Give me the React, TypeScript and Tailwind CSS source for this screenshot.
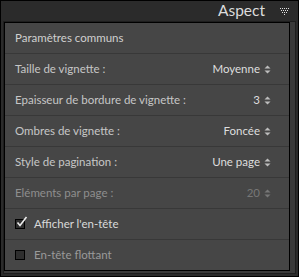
import { Fragment } from "react";

type Row = { label: string; value: string; disabled?: boolean };

const rows: Row[] = [
  { label: "Taille de vignette :", value: "Moyenne" },
  { label: "Epaisseur de bordure de vignette :", value: "3" },
  { label: "Ombres de vignette :", value: "Foncée" },
  { label: "Style de pagination :", value: "Une page" },
  { label: "Eléments par page :", value: "20", disabled: true },
];

const Stepper = ({ dim }: { dim?: boolean }) => (
  <svg width="7" height="9" viewBox="0 0 7 9" className="ml-[4px]">
    <path d="M0.5 3.5 L3.5 0.5 L6.5 3.5 Z" fill={dim ? "#777" : "#bdbdbd"} />
    <path d="M0.5 5.5 L3.5 8.5 L6.5 5.5 Z" fill={dim ? "#777" : "#bdbdbd"} />
  </svg>
);

const DotTriangle = () => (
  <svg width="9" height="7" viewBox="0 0 9 7">
    {[0, 2, 4, 6, 8].map((x) => (
      <rect key={`a${x}`} x={x} y={0} width={1} height={1} fill="#e0e0e0" />
    ))}
    {[1, 3, 5, 7].map((x) => (
      <rect key={`b${x}`} x={x} y={2} width={1} height={1} fill="#e0e0e0" />
    ))}
    {[2, 4, 6].map((x) => (
      <rect key={`c${x}`} x={x} y={4} width={1} height={1} fill="#e0e0e0" />
    ))}
    <rect x={4} y={6} width={1} height={1} fill="#e0e0e0" />
  </svg>
);

const Checkbox = ({ checked }: { checked?: boolean }) => (
  <div className="relative w-[10px] h-[10px] border border-black bg-[#2e2e2e]">
    {checked && (
      <svg width="12" height="12" viewBox="0 0 12 12" className="absolute -top-[4px] left-[0px]">
        <path d="M1.5 6.5 L4 9.5 L10.5 1" stroke="#ececec" strokeWidth="1.6" fill="none" />
      </svg>
    )}
  </div>
);

export default function App() {
  return (
    <div
      className="w-[299px] h-[277px] bg-[#2b2b2b] border border-black flex flex-col"
      style={{ fontFamily: 'Lato, "Open Sans", sans-serif' }}
    >
      {/* Header */}
      <div className="h-[21px] flex items-center justify-end pr-[9px] gap-[15px]">
        <span className="text-[15.5px] leading-none text-[#dcdcdc]">Aspect</span>
        <DotTriangle />
      </div>

      <div className="flex-1 mx-[2px] mb-[2px] bg-[#3a3a3a] border border-[#1e1e1e] flex flex-col pb-[2px] pr-[5px]">
        <div className="flex-1 bg-[#464646] border border-black flex flex-col text-[11.5px] text-[#c6c6c6]">
          <div className="h-[30px] flex items-center px-[10px] text-[#d0d0d0]">Paramètres communs</div>
          {rows.map((r) => (
            <Fragment key={r.label}>
              <div className="h-px bg-[#383838]" />
              <div className="h-[30px] flex items-center justify-between pl-[10px] pr-[18px]">
                <span className={r.disabled ? "text-[#8e8e8e]" : ""}>{r.label}</span>
                <span className={`flex items-center ${r.disabled ? "text-[#777]" : "text-[#dedede]"}`}>
                  {r.value}
                  <Stepper dim={r.disabled} />
                </span>
              </div>
            </Fragment>
          ))}
          <div className="h-px bg-[#383838]" />
          <div className="h-[30px] flex items-center gap-[9px] px-[10px] text-[#dadada]">
            <Checkbox checked />
            <span>Afficher l'en-tête</span>
          </div>
          <div className="h-px bg-[#383838]" />
          <div className="h-[30px] flex items-center gap-[9px] px-[10px] text-[#9a9a9a]">
            <Checkbox />
            <span>En-tête flottant</span>
          </div>
        </div>
      </div>
    </div>
  );
}
